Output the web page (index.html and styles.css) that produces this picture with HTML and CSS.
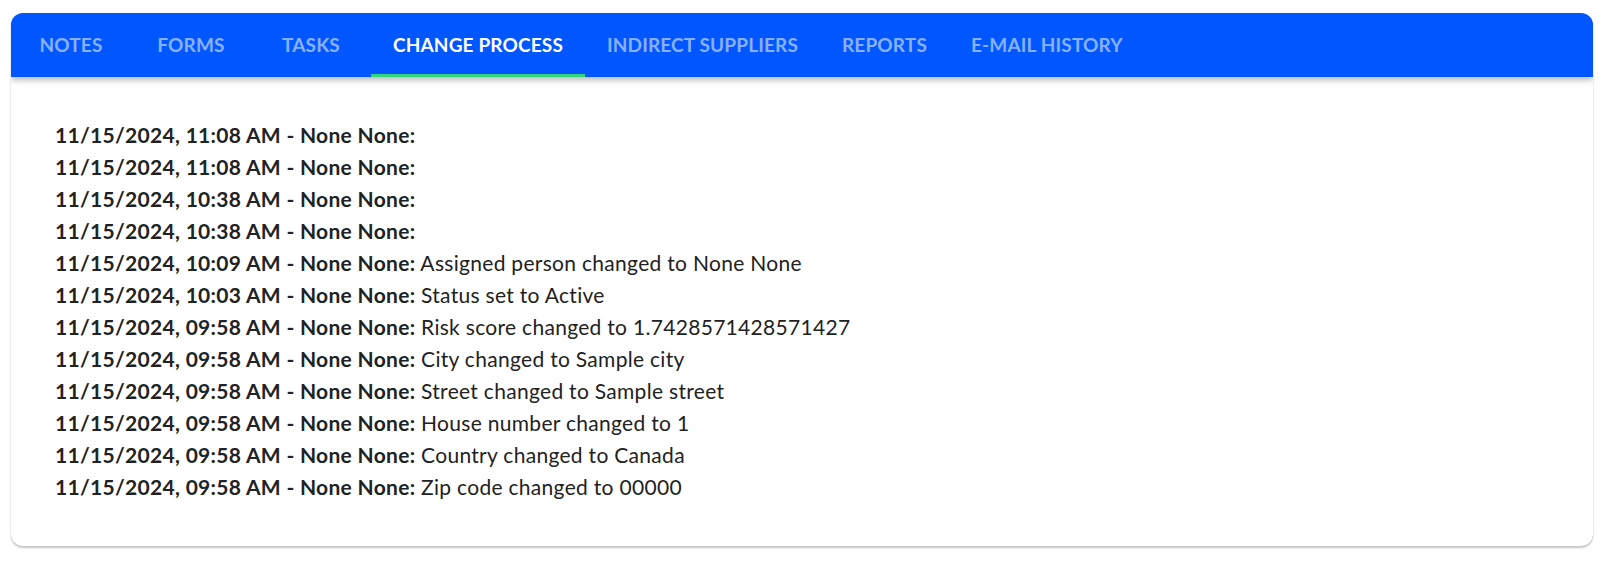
FILE: index.html
```html
<!DOCTYPE html>
<html lang="en">
<head>
<meta charset="utf-8">
<title>Change process</title>
<link rel="stylesheet" href="styles.css">
</head>
<body>
<div class="card">
  <nav class="tabs">
    <div class="tab">Notes</div>
    <div class="tab">Forms</div>
    <div class="tab">Tasks</div>
    <div class="tab active">Change Process</div>
    <div class="tab">Indirect Suppliers</div>
    <div class="tab">Reports</div>
    <div class="tab">E-mail History</div>
  </nav>
  <div class="log">
    <div class="row"><b>11/15/2024, 11:08 AM - None None:</b></div>
    <div class="row"><b>11/15/2024, 11:08 AM - None None:</b></div>
    <div class="row"><b>11/15/2024, 10:38 AM - None None:</b></div>
    <div class="row"><b>11/15/2024, 10:38 AM - None None:</b></div>
    <div class="row"><b>11/15/2024, 10:09 AM - None None:</b> Assigned person changed to None None</div>
    <div class="row"><b>11/15/2024, 10:03 AM - None None:</b> Status set to Active</div>
    <div class="row"><b>11/15/2024, 09:58 AM - None None:</b> Risk score changed to 1.7428571428571427</div>
    <div class="row"><b>11/15/2024, 09:58 AM - None None:</b> City changed to Sample city</div>
    <div class="row"><b>11/15/2024, 09:58 AM - None None:</b> Street changed to Sample street</div>
    <div class="row"><b>11/15/2024, 09:58 AM - None None:</b> House number changed to 1</div>
    <div class="row"><b>11/15/2024, 09:58 AM - None None:</b> Country changed to Canada</div>
    <div class="row"><b>11/15/2024, 09:58 AM - None None:</b> Zip code changed to 00000</div>
  </div>
</div>
</body>
</html>
```

FILE: styles.css
```css
* { box-sizing: border-box; }
html, body { margin: 0; padding: 0; background: #ffffff; }
body {
  padding: 13px 15px 16px 11px;
  font-family: "Lato", "Open Sans", sans-serif;
  color: #222222;
}
.card {
  background: #ffffff;
  border-radius: 12px;
  box-shadow: 0 2px 2px rgba(0,0,0,0.22), 0 0 1px rgba(0,0,0,0.18);
  overflow: hidden;
  height: 533px;
}
.tabs {
  display: flex;
  height: 64px;
  background: #0057ff;
  box-shadow: 0 3px 6px rgba(0,0,0,0.28);
  position: relative;
}
.tab {
  min-width: 120px;
  padding: 0 22px;
  display: flex;
  align-items: center;
  justify-content: center;
  text-transform: uppercase;
  font-size: 19px;
  letter-spacing: 0.15px;
  font-weight: 700;
  color: rgba(255,255,255,0.55);
  border-bottom: 3px solid transparent;
  padding-top: 2px;
}
.tab.active {
  color: #ffffff;
  border-bottom-color: #2fd47c;
}
.log {
  padding: 42px 44px 0 44px;
  font-size: 21px;
  letter-spacing: 0.3px;
  line-height: 32px;
  color: #222222;
}
.row b { font-weight: 700; }
```
